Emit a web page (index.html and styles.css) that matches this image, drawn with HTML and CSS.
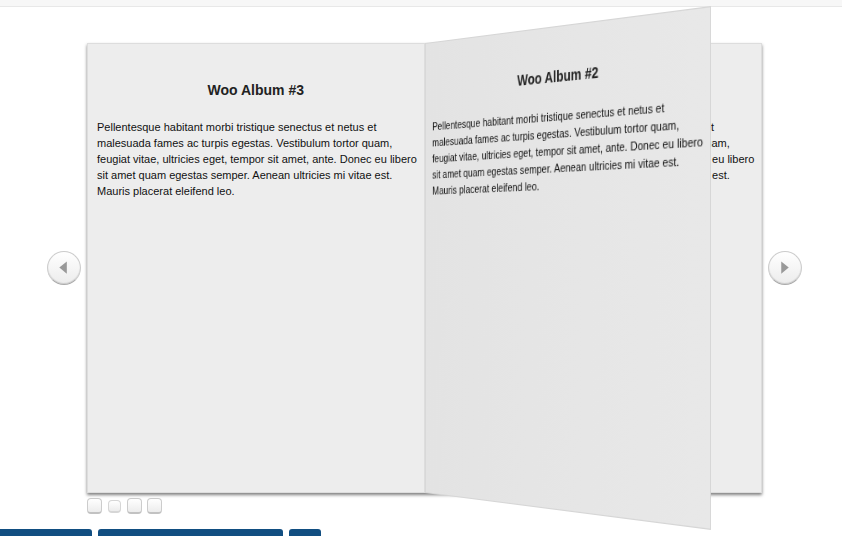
FILE: index.html
```html
<!DOCTYPE html>
<html lang="en">
<head>
<meta charset="utf-8">
<title>Woo Albums</title>
<link rel="stylesheet" href="styles.css">
</head>
<body>
<header class="topbar"></header>
<main>
  <section class="viewer">
    <button class="arrow" type="button" aria-label="Previous page"><svg viewBox="0 0 34 34"><path d="M12 16.500 20 10v13z"/></svg></button>
    <div class="book">
      <article class="page">
        <h2>Woo Album #3</h2>
        <p>Pellentesque habitant morbi tristique senectus et netus et malesuada fames ac turpis egestas. Vestibulum tortor quam, feugiat vitae, ultricies eget, tempor sit amet, ante. Donec eu libero sit amet quam egestas semper. Aenean ultricies mi vitae est. Mauris placerat eleifend leo.</p>
      </article>
      <article class="page">
        <h2>Woo Album #4</h2>
        <p>Pellentesque habitant morbi tristique senectus et netus et malesuada fames ac turpis egestas. Vestibulum tortor quam, feugiat vitae, ultricies eget, tempor sit amet, ante. Donec eu libero sit amet quam egestas semper. Aenean ultricies mi vitae est. Mauris placerat eleifend leo.</p>
      </article>
      <article class="page turning">
        <h2>Woo Album #2</h2>
        <p>Pellentesque habitant morbi tristique senectus et netus et malesuada fames ac turpis egestas. Vestibulum tortor quam, feugiat vitae, ultricies eget, tempor sit amet, ante. Donec eu libero sit amet quam egestas semper. Aenean ultricies mi vitae est. Mauris placerat eleifend leo.</p>
      </article>
    </div>
    <button class="arrow" type="button" aria-label="Next page"><svg viewBox="0 0 34 34"><path d="M21 16.500 13 10v13z"/></svg></button>
  </section>
  <nav class="dots" aria-label="Pages">
    <button class="dot" type="button" aria-label="Page 1"></button>
    <button class="dot current" type="button" aria-label="Page 2"></button>
    <button class="dot" type="button" aria-label="Page 3"></button>
    <button class="dot" type="button" aria-label="Page 4"></button>
  </nav>
  <nav class="actions" aria-label="Actions">
    <button class="action first" type="button" aria-label="Back"></button>
    <button class="action wide" type="button" aria-label="Open album"></button>
    <button class="action small" type="button" aria-label="More"></button>
  </nav>
</main>
</body>
</html>
```
FILE: styles.css
```css
* {
  box-sizing: border-box;
}

body {
  margin: 0;
  height: 100vh;
  overflow: hidden;
  background: #fff;
  color: #111;
  font: 11px/16px "Liberation Sans", Arial, sans-serif;
}

button {
  padding: 0;
  border: 0;
  font: inherit;
  cursor: pointer;
}

.topbar {
  height: 7px;
  background: #f7f7f7;
  border-bottom: 1px solid #e8e8e8;
}

.viewer {
  display: flex;
  align-items: center;
  gap: 6px;
  padding: 36px 40px 0 47px;
}

.arrow {
  flex: none;
  width: 34px;
  height: 34px;
  border: 1px solid #ccc;
  border-bottom-color: #aaa;
  border-radius: 50%;
  background: linear-gradient(#fff, #ececec);
  box-shadow: inset 0 -1px 1px #ccc;
}

.arrow svg {
  display: block;
  width: 100%;
  fill: #999;
}

.book {
  position: relative;
  display: grid;
  flex: 1;
  grid-template-columns: 1fr 1fr;
  height: 450px;
  perspective: 1648px;
  box-shadow: 0 2px 3px rgba(0, 0, 0, .5);
}

.page {
  padding: 38px 9px 0;
  background: #ededed;
  border: 1px solid #ddd;
}

.turning {
  position: absolute;
  top: 0;
  left: 50%;
  width: 50%;
  height: 100%;
  background: linear-gradient(to right, #e3e3e3, #e8e8e8);
  border-color: #d6d6d6;
  transform: rotateY(-43.4deg);
  transform-origin: left center;
}

.page h2 {
  margin: 0 0 20px;
  color: #222;
  font-size: 14px;
  line-height: 17px;
  text-align: center;
}

.page p {
  margin: 0 -6px 0 0;
}

.dots {
  display: flex;
  align-items: center;
  gap: 5px;
  padding: 5px 87px 0;
}

.dot {
  width: 15px;
  height: 16px;
  border: 1px solid #ccc;
  border-bottom: 2px solid #c2c2c2;
  border-radius: 4px;
  background: linear-gradient(#fff, #ececec);
}

.current {
  width: 13px;
  height: 13px;
  margin: 0 1px;
  border-color: #d6d6d6;
}

.actions {
  display: flex;
  gap: 6px;
  margin-top: 15px;
}

.action {
  height: 30px;
  border-radius: 3px;
  background: #114e81;
}

.first {
  width: 92px;
  border-top-left-radius: 0;
}

.wide {
  width: 185px;
}

.small {
  width: 32px;
}
```
